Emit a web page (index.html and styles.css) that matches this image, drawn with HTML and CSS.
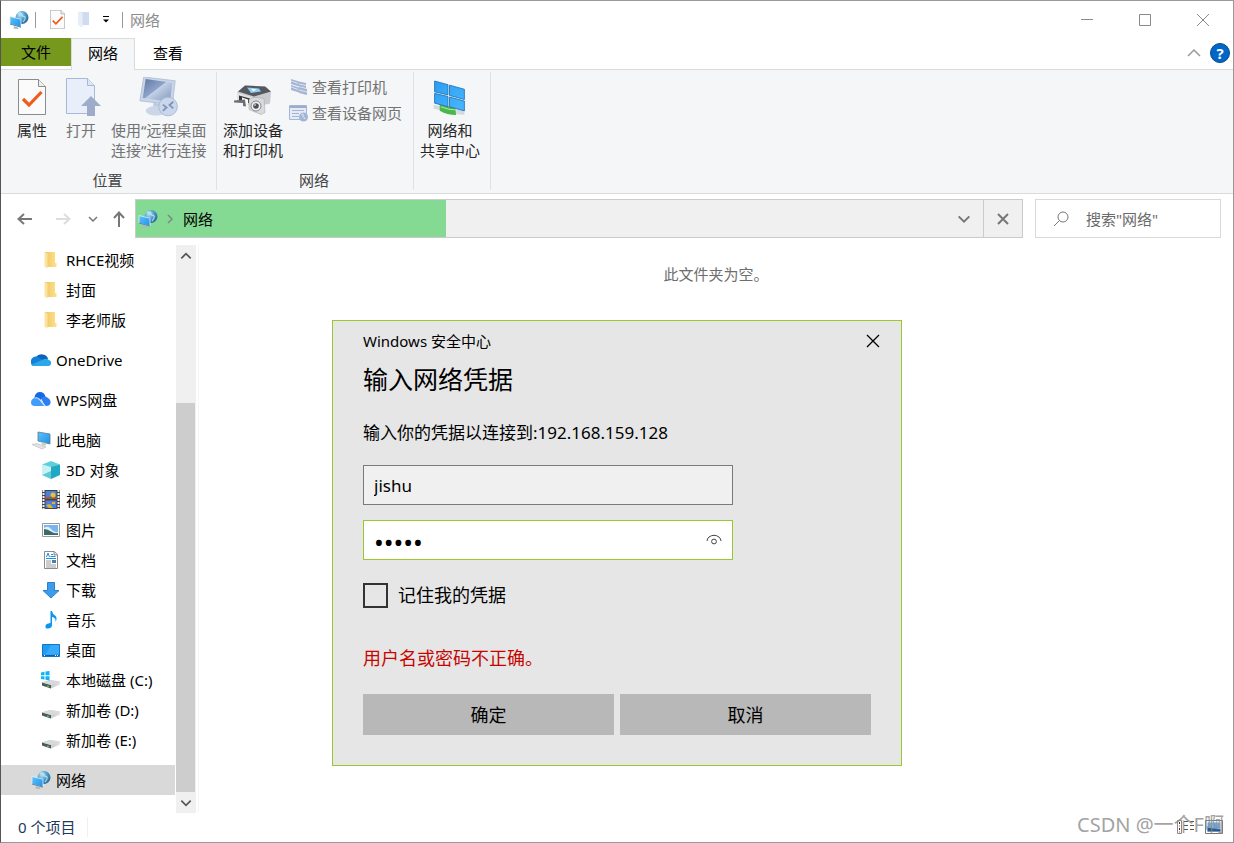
FILE: index.html
```html
<!DOCTYPE html>
<html lang="zh-CN">
<head>
<meta charset="utf-8">
<title>网络</title>
<link rel="stylesheet" href="styles.css">
</head>
<body>
<svg class="sprite" aria-hidden="true">
  <defs>
    <linearGradient id="g-screen" x1="0" y1="0" x2="1" y2="1"><stop offset="0" stop-color="#5cc4ff"/><stop offset="1" stop-color="#1e90e6"/></linearGradient>
    <radialGradient id="g-globe" cx=".35" cy=".3" r=".8"><stop offset="0" stop-color="#bfe6f5"/><stop offset=".5" stop-color="#4a9cc8"/><stop offset="1" stop-color="#1f5f90"/></radialGradient>
    <linearGradient id="g-folder" x1="0" y1="0" x2="1" y2="0"><stop offset="0" stop-color="#edc765"/><stop offset="1" stop-color="#ffe08a"/></linearGradient>
    <linearGradient id="g-dim" x1="0" y1="0" x2="1" y2="1"><stop offset="0" stop-color="#5f78a4"/><stop offset=".45" stop-color="#8ea3c8"/><stop offset=".47" stop-color="#c3d0e6"/><stop offset="1" stop-color="#7f95bc"/></linearGradient>
    <linearGradient id="g-tile" x1="0" y1="0" x2="1" y2="1"><stop offset="0" stop-color="#2c9cf0"/><stop offset="1" stop-color="#49b8ff"/></linearGradient>
    <linearGradient id="g-drive" x1="0" y1="0" x2="1" y2="0"><stop offset="0" stop-color="#b5b5b8"/><stop offset="1" stop-color="#e2e2e4"/></linearGradient>
  </defs>
  <symbol id="i-network" viewBox="0 0 20 20">
    <circle cx="13" cy="7.500" r="6.500" fill="url(#g-globe)"/>
    <path d="M9 4c2-2 4-1 4 1s2 1 3 2-1 4-2 5" fill="none" stroke="#d5effa" stroke-width="1.200" opacity=".7"/>
    <path d="M1 6.500 12 9.200v8L1 14z" fill="url(#g-screen)" stroke="#e4eef4" stroke-width=".8"/>
    <path d="M5 16.200l4 1.200.5 1.600-5-.6z" fill="#a9b7c0"/>
    <path d="M1 14l11 3.200" stroke="#3e6e8e" stroke-width=".8"/>
  </symbol>
  <symbol id="i-check" viewBox="0 0 28 36">
    <path d="M.5.500h20l7 7v28H.5z" fill="#fbfbfb" stroke="#8b8b8b"/><path d="M20.500.500v7h7" fill="#eee" stroke="#8b8b8b"/>
    <path d="M5 20l6 6L23.500 13" fill="none" stroke="#f05a1a" stroke-width="3.200"/>
  </symbol>
  <symbol id="i-folder-dim" viewBox="0 0 14 18"><path d="M3 1h10v14H3z" fill="#cfdcf0"/><path d="M1 0l5 2v16l-5-3z" fill="#e6eef9"/></symbol>
  <symbol id="i-folder" viewBox="0 0 20 20"><path d="M4 2h10v11h1.500v4H4z" fill="url(#g-folder)"/><path d="M3.500 2l3 1.500V18.500l-3-2z" fill="#fbe3a0"/></symbol>
  <symbol id="i-open" viewBox="0 0 36 40">
    <path d="M.5 1.500h21l7 7v28H.5z" fill="#e8effa" stroke="#a9b8d4"/><path d="M21.500 1.500v7h7" fill="#dce6f5" stroke="#a9b8d4"/>
    <path d="M25 19l10 10h-6v10h-8V29h-6z" fill="#9dacc9"/>
  </symbol>
  <symbol id="i-remote" viewBox="0 0 40 42">
    <path d="M4 0l33 4-3 25L0 25z" fill="#c9d5e8" stroke="#b3c1d8"/><path d="M6 2l28 4-2.500 20L3 22z" fill="url(#g-dim)"/>
    <path d="M14 27l8 1v6h-8z" fill="#bdc9dd"/><ellipse cx="17" cy="35.500" rx="11" ry="5" fill="#cbd6e7"/>
    <circle cx="29.500" cy="31" r="9.800" fill="#c9d6eb" stroke="#a8b9d6"/>
    <path d="M24 29l4 3-4 3.500M35 26l-4 3.500 4 3.500" fill="none" stroke="#7d92b8" stroke-width="1.800"/>
  </symbol>
  <symbol id="i-printer" viewBox="0 0 38 32">
    <path d="M3 9l9-7 20 1 5 6-1 11-13 3L3 17z" fill="#c9cccf"/><path d="M4 8l7-6 20 1 6 5-17 5z" fill="#55595d"/>
    <path d="M13 4l12 1 2 3-10 1.500z" fill="#8ecdf3"/><path d="M17 5l6 1-4 2z" fill="#e9f7ff"/>
    <path d="M3 9l16 5v9L3 18z" fill="#dfe1e3"/><path d="M5 12l11 3v5L5 17z" fill="#33373a"/>
    <path d="M8 14l6 2v5l-6-1.500z" fill="#fff"/><path d="M0 17l11-1 1 7-3-.5v-3l-9-.5z" fill="#6d7073"/>
    <path d="M15 16l4-2h4l7 1 1 14-4 2-12-5z" fill="#d9dadb" stroke="#a9abad" stroke-width=".6"/>
    <circle cx="22" cy="22.500" r="5" fill="#f2f2f2" stroke="#888"/><circle cx="22" cy="22.500" r="2.800" fill="#48525a"/><circle cx="21" cy="21.500" r="1" fill="#9dc4d6"/>
  </symbol>
  <symbol id="i-printers-dim" viewBox="0 0 18 18">
    <path d="M1 1l8 2.500v5L1 6zM9 3.500l7 1.500v5L9 8.500zM1 7l8 2.500v5L1 12zM9 9l8 2v6l-8-2z" fill="#a5b5d2"/><path d="M1 3l7 2.500M9 6l7 1.500M1 9l7 2.500M9 12l8 2" stroke="#dbe4f2"/>
  </symbol>
  <symbol id="i-webpage-dim" viewBox="0 0 20 18">
    <path d="M.5 1.500h17v14H.5z" fill="#e4ebf6" stroke="#a5b5d2"/><path d="M1 3h16" stroke="#9aacd0" stroke-width="2"/>
    <path d="M3 6.500h12M3 9.500h7M3 12.500h7" stroke="#a5b5d2"/><circle cx="14.500" cy="13" r="4.500" fill="#a3b6d6"/><path d="M12 11c2-2 3 0 2 1s2 1 2 3" fill="none" stroke="#e4ebf6"/>
  </symbol>
  <symbol id="i-center" viewBox="0 0 32 36">
    <path d="M0 24l9 2v4l-9-2z" fill="#d6dadd"/><path d="M22 28l8 1v5l-8-1z" fill="#d6dadd"/>
    <path d="M6 23c5 2 10 3 15 3l1 8c-6 0-11-1-16-4z" fill="#4cb648"/><path d="M7 26c5 2 9 3 14 3" stroke="#a5e59c" fill="none"/>
    <path d="M1 1l13 3.500v10L1 11.500zM15.500 5l14.500 4v10l-14.500-4zM1 13l13 3v10L1 22.500zM15.500 16.500l14.500 4v9.500l-14.500-4z" fill="url(#g-tile)" stroke="#1b6fb5" stroke-width=".8"/>
  </symbol>
  <symbol id="i-onedrive" viewBox="0 0 20 20">
    <path d="M5 7a6.500 5.500 0 0 1 12 2l-6 3z" fill="#0a63bd"/><path d="M5 6.500a5 5 0 0 0-5 6q0 3.500 3 3.500l10-5-4-3q-2-1.500-4-1.500z" fill="#1381d8"/>
    <path d="M13 9q3-1 5 1 2.300 1 2.300 3t-2.500 3H4q-2 0-3-1.500z" fill="#2ba7ea"/>
  </symbol>
  <symbol id="i-wps" viewBox="0 0 20 20">
    <path d="M3.500 8a5.500 5.500 0 0 1 11-1q-5 1-7 7L6 9z" fill="#1668e8"/><path d="M3.500 8Q0 9 0 12.500T4 16h11q-3-3-6-7-2-2-5.500-1z" fill="#3f9dfb"/>
    <path d="M10 8q4-3 7 0 3 2 2.500 5T15 16q-2-1-5-8z" fill="#2c7ff2"/><path d="M4 8q3-1 5 2l5 6" fill="none" stroke="#cfe6ff" stroke-width="1.200"/>
  </symbol>
  <symbol id="i-pc" viewBox="0 0 20 20">
    <path d="M7 2l12 2v10L7 11z" fill="url(#g-screen)" stroke="#5d7a8b" stroke-width=".8"/><path d="M10 12l5 1v2.500h-4z" fill="#c6cbd0"/>
    <path d="M1 14.500l5-1 9 3.500-4 2z" fill="#e1e4e7" stroke="#b3b8bc" stroke-width=".6"/>
  </symbol>
  <symbol id="i-3d" viewBox="0 0 20 20">
    <path d="M1 4.500l9-3.500 9 3.500L10 8z" fill="#5fcfdc"/><path d="M1 4.500L10 7v12l-9-4z" fill="#c9f2f5"/><path d="M1 15l9-4v8z" fill="#5fcbd8"/><path d="M19 4.500L10 7v12l9-4z" fill="#21a9c4"/>
  </symbol>
  <symbol id="i-video" viewBox="0 0 20 20">
    <path d="M1 0h18v19H1z" fill="#444"/><path d="M2.500 0v19M17.500 0v19" stroke="#f2f2f2" stroke-width="2" stroke-dasharray="2 1"/>
    <path d="M4.500 1h11v8h-11zM4.500 10.500h11V18h-11z" fill="#4d7fe0"/><path d="M4.500 7h11v2h-11z" fill="#c7482e"/><circle cx="12" cy="5" r="2.500" fill="#e6c52d"/><path d="M5 15l4-1 3 4H8zM11 12h3v2h-3z" fill="#e0b524"/><path d="M10 6l2 3h-3z" fill="#2e9b44"/>
  </symbol>
  <symbol id="i-picture" viewBox="0 0 20 20">
    <path d="M1.500 3.500h17v13h-17z" fill="#fff" stroke="#999"/><path d="M3 5h14v10H3z" fill="#78b5ec"/><path d="M3 8q4-3 7 1t7 3v3H3z" fill="#dcefff"/><path d="M3 9q4 0 7 2.500t7 1.500v2H3z" fill="#3a6b64"/>
  </symbol>
  <symbol id="i-document" viewBox="0 0 20 20">
    <path d="M3.500 1.500h10l3 3v14h-13z" fill="#fff" stroke="#8b8b8b"/><path d="M13 1.500v3.500h3.500" fill="#ddd" stroke="#8b8b8b"/><path d="M5.500 7l1.500-4 1.500 4M10 4.500h2M9.500 6.500h5M5 8.500h10" stroke="#1c8fe0" fill="none"/><path d="M5 11h5M5 13h5M5 15h10M5 17h10" stroke="#9a9a9a"/><path d="M11 10h4v3h-4z" fill="#4b7fa6"/>
  </symbol>
  <symbol id="i-download" viewBox="0 0 20 20"><path d="M6.500 2.500h7v8h4.500L10 18 2 10.500h4.500z" fill="#3c9bea" stroke="#2b80cb"/></symbol>
  <symbol id="i-music" viewBox="0 0 20 20"><path d="M9.500 1h1.500q.5 3 3 4.500T15 11q-1 1-.5-.5Q15 8 11 7v8q0 3-3.500 3.500T4.500 16q0-2.500 5-3z" fill="#0b95f3"/></symbol>
  <symbol id="i-desktop" viewBox="0 0 20 20"><path d="M1.500 4.500h17v12h-17z" fill="#1e9bf5" stroke="#0f78c6"/><path d="M10 5h8v9l-14 1z" fill="#41b0ff" opacity=".7"/><path d="M2 15.500h16" stroke="#0a5fa5"/><path d="M3 15.500h1M14 15.500h1M16 15.500h1" stroke="#fff"/></symbol>
  <symbol id="i-drive" viewBox="0 0 20 20">
    <path d="M1 12.500L9 10l10 1.500v3L10 18.500 1 15.500z" fill="url(#g-drive)"/><path d="M1 12.500l9 2.500v3.500l-9-3z" fill="#54575a"/><path d="M1 12.500L9 10l10 1.500-9 3.500z" fill="#d9d9dc"/><path d="M6 16l2 .6" stroke="#35d43f" stroke-width="1.500"/>
  </symbol>
  <symbol id="i-drive-c" viewBox="0 0 20 20">
    <use href="#i-drive"/><path d="M0 2.500l3.500-.7v3.400H0zM4.500 1.600L8.500 1v4.200h-4zM0 6.200h3.500v3.400L0 9zM4.500 6.200h4v4.200l-4-.7z" fill="#0fb5f2"/>
  </symbol>
  <symbol id="i-down" viewBox="0 0 12 12"><path d="M2 4l4 4 4-4" fill="none" stroke="currentColor" stroke-width="1.500"/></symbol>
  <symbol id="i-up" viewBox="0 0 12 12"><path d="M2 8l4-4 4 4" fill="none" stroke="currentColor" stroke-width="1.500"/></symbol>
</svg>

<div class="window">
  <header class="titlebar">
    <svg class="app-icon"><use href="#i-network"/></svg>
    <span class="rule"></span>
    <button class="quick" aria-label="属性"><svg class="quick-check"><use href="#i-check"/></svg></button>
    <button class="quick" aria-label="新建文件夹"><svg class="quick-folder"><use href="#i-folder-dim"/></svg></button>
    <button class="quick" aria-label="自定义"><svg class="quick-more" viewBox="0 0 8 8"><path d="M1 .5h6" stroke="#000"/><path d="M1 3.500h6L4 6.500z"/></svg></button>
    <span class="rule rule-last"></span>
    <h1 class="window-title">网络</h1>
    <div class="window-controls">
      <button aria-label="最小化"><svg viewBox="0 0 12 12"><path d="M0 5.500h12"/></svg></button>
      <button aria-label="最大化"><svg viewBox="0 0 12 12"><path d="M.5.500h11v11H.5z"/></svg></button>
      <button aria-label="关闭"><svg viewBox="0 0 12 12"><path d="M0 0l12 12M12 0L0 12"/></svg></button>
    </div>
  </header>

  <nav class="tabs">
    <button class="tab tab-file">文件</button>
    <button class="tab tab-active">网络</button>
    <button class="tab">查看</button>
    <div class="tabs-end">
      <button aria-label="折叠功能区"><svg class="collapse" viewBox="0 0 14 8"><path d="M1 7l6-6 6 6" fill="none" stroke="#9a9a9a" stroke-width="1.500"/></svg></button>
      <button class="help" aria-label="帮助">?</button>
    </div>
  </nav>

  <section class="ribbon">
    <div class="group group-place">
      <div class="tools">
        <button class="tool"><svg class="ic-check"><use href="#i-check"/></svg>属性</button>
        <button class="tool dim"><svg class="ic-open"><use href="#i-open"/></svg>打开</button>
        <button class="tool dim"><svg class="ic-remote"><use href="#i-remote"/></svg>使用“远程桌面<br>连接”进行连接</button>
      </div>
      <p class="group-name">位置</p>
    </div>
    <div class="group group-net">
      <div class="tools">
        <button class="tool"><svg class="ic-printer"><use href="#i-printer"/></svg>添加设备<br>和打印机</button>
        <div class="small-tools">
          <button class="small-tool"><svg><use href="#i-printers-dim"/></svg>查看打印机</button>
          <button class="small-tool"><svg><use href="#i-webpage-dim"/></svg>查看设备网页</button>
        </div>
      </div>
      <p class="group-name">网络</p>
    </div>
    <div class="group group-center">
      <div class="tools">
        <button class="tool"><svg class="ic-center"><use href="#i-center"/></svg>网络和<br>共享中心</button>
      </div>
    </div>
  </section>

  <div class="navbar">
    <div class="history">
      <button aria-label="后退"><svg class="arrow" viewBox="0 0 16 16"><path d="M1 8h14M7 3L1.500 8 7 13"/></svg></button>
      <button aria-label="前进"><svg class="arrow off" viewBox="0 0 16 16"><path d="M1 8h14M9 3l5.500 5L9 13"/></svg></button>
      <button class="recent" aria-label="最近"><svg class="chev"><use href="#i-down"/></svg></button>
      <button class="parent" aria-label="向上"><svg class="arrow" viewBox="0 0 16 16"><path d="M8 16V2M3 7l5-5.500L13 7"/></svg></button>
    </div>
    <div class="address">
      <div class="progress" style="width:35%"></div>
      <svg class="address-icon"><use href="#i-network"/></svg>
      <svg class="crumb" viewBox="0 0 8 12"><path d="M2 2l4 4-4 4" fill="none" stroke="#7d8a80" stroke-width="1.500"/></svg>
      <span class="address-text">网络</span>
      <button class="address-drop" aria-label="历史"><svg><use href="#i-down"/></svg></button>
      <button class="address-stop" aria-label="停止"><svg viewBox="0 0 12 12"><path d="M1 1l10 10M11 1L1 11" stroke="#777" stroke-width="2"/></svg></button>
    </div>
    <label class="search">
      <svg viewBox="0 0 16 16"><path d="M1 15l5.500-5.500" /><circle cx="10" cy="6" r="5"/></svg>
      <input type="text" placeholder='搜索"网络"' aria-label="搜索">
    </label>
  </div>

  <main class="content">
    <nav class="tree">
      <ul>
        <li><a class="sub" href="#"><svg><use href="#i-folder"/></svg>RHCE视频</a></li>
        <li><a class="sub" href="#"><svg><use href="#i-folder"/></svg>封面</a></li>
        <li><a class="sub" href="#"><svg><use href="#i-folder"/></svg>李老师版</a></li>
      </ul>
      <ul><li><a href="#"><svg><use href="#i-onedrive"/></svg>OneDrive</a></li></ul>
      <ul><li><a href="#"><svg><use href="#i-wps"/></svg>WPS网盘</a></li></ul>
      <ul>
        <li><a href="#"><svg><use href="#i-pc"/></svg>此电脑</a></li>
        <li><a class="sub" href="#"><svg><use href="#i-3d"/></svg>3D 对象</a></li>
        <li><a class="sub" href="#"><svg><use href="#i-video"/></svg>视频</a></li>
        <li><a class="sub" href="#"><svg><use href="#i-picture"/></svg>图片</a></li>
        <li><a class="sub" href="#"><svg><use href="#i-document"/></svg>文档</a></li>
        <li><a class="sub" href="#"><svg><use href="#i-download"/></svg>下载</a></li>
        <li><a class="sub" href="#"><svg><use href="#i-music"/></svg>音乐</a></li>
        <li><a class="sub" href="#"><svg><use href="#i-desktop"/></svg>桌面</a></li>
        <li><a class="sub" href="#"><svg><use href="#i-drive-c"/></svg>本地磁盘 (C:)</a></li>
        <li><a class="sub" href="#"><svg><use href="#i-drive"/></svg>新加卷 (D:)</a></li>
        <li><a class="sub" href="#"><svg><use href="#i-drive"/></svg>新加卷 (E:)</a></li>
      </ul>
      <ul><li><a class="selected" href="#"><svg><use href="#i-network"/></svg>网络</a></li></ul>
    </nav>
    <div class="scrollbar">
      <button aria-label="向上滚动"><svg><use href="#i-up"/></svg></button>
      <div class="track"><div class="thumb"></div></div>
      <button aria-label="向下滚动"><svg><use href="#i-down"/></svg></button>
    </div>
    <section class="files"><p>此文件夹为空。</p></section>
  </main>

  <footer class="status">
    <span class="count">0 个项目</span>
    <div class="views">
      <button aria-label="详细信息"><svg viewBox="0 0 18 16"><path d="M.5 1.500h4v13h-4z" fill="#fff" stroke="#888"/><path d="M2 4h1M2 10h1" stroke="#333" stroke-width="2"/><path d="M2 7h1M2 13h1" stroke="#c33" stroke-width="1"/><path d="M7 2.500h4M13 2.500h4M7 6.500h4M13 6.500h4M7 10.500h4M13 10.500h4" stroke="#555"/></svg></button>
      <button aria-label="大图标"><svg viewBox="0 0 18 16"><path d="M.5 1.500h17v13H.5z" fill="#fff" stroke="#777"/><path d="M2.500 3.500h13v9h-13z" fill="#6fb1ea"/><path d="M2.500 9l5 0 8 1.500v2h-13z" fill="#27578a"/></svg></button>
    </div>
  </footer>

  <form class="dialog" role="dialog" aria-labelledby="dialog-heading">
    <div class="dialog-bar"><span>Windows 安全中心</span>
      <button type="button" aria-label="关闭"><svg viewBox="0 0 14 14"><path d="M1 1l12 12M13 1L1 13" stroke="#000" stroke-width="1.300"/></svg></button></div>
    <h2 id="dialog-heading">输入网络凭据</h2>
    <p class="message">输入你的凭据以连接到:192.168.159.128</p>
    <input class="field" type="text" value="jishu" aria-label="用户名">
    <div class="field field-active">
      <input type="password" value="12345" aria-label="密码">
      <button type="button" aria-label="显示密码"><svg viewBox="0 0 16 12"><path d="M1 7q0-2 2-4 5-3.500 10 0 2 2 2 4" fill="none" stroke="#444"/><circle cx="8" cy="7.500" r="2.400" fill="none" stroke="#444"/></svg></button>
    </div>
    <label class="remember"><input type="checkbox">记住我的凭据</label>
    <p class="error">用户名或密码不正确。</p>
    <div class="actions"><button type="button">确定</button><button type="button">取消</button></div>
  </form>
  <div class="watermark">CSDN @一个F啊</div>
</div>
</body>
</html>
```
FILE: styles.css
```css
* { box-sizing: border-box; }
body { margin: 0; font: 15px/20px "Noto Sans", "Noto Sans CJK SC", sans-serif; color: #000; background: #fff; }
button, input { font: inherit; color: inherit; }
button { border: 0; padding: 0; margin: 0; background: none; display: flex; align-items: center; justify-content: center; }
p, h1, h2, ul { margin: 0; padding: 0; font-weight: 400; }
li { list-style: none; }
a { color: inherit; text-decoration: none; }
svg { display: block; flex: none; }
.sprite { position: absolute; width: 0; height: 0; }

.window { position: relative; min-height: 100vh; display: flex; flex-direction: column; border: 1px solid #999; border-left-color: #555; background: #fff; }

.titlebar { display: flex; align-items: center; height: 37px; padding-left: 8px; }
.app-icon { width: 20px; height: 20px; }
.rule { width: 1px; height: 16px; margin: 0 14px 0 6px; background: #999; }
.quick { margin-right: 12px; }
.quick-check { width: 15px; height: 19px; }
.quick-folder { width: 13px; height: 17px; }
.quick-more { width: 8px; height: 8px; }
.rule-last { margin: 0 7px 0 0; }
.window-title { font-size: 15px; color: #8c8c8c; }
.window-controls { display: flex; margin-left: auto; padding-right: 1px; }
.window-controls button { width: 58px; height: 36px; }
.window-controls svg { width: 12px; height: 12px; fill: none; stroke: #8a8a8a; }

.tabs { display: flex; height: 32px; border-bottom: 1px solid #dadbdc; }
.tab { width: 66px; height: 30px; }
.tab-file { width: 70px; height: 28px; background: #76981d; }
.tab-active { width: 64px; height: 32px; padding-bottom: 3px; background: #f5f6f7; border: 1px solid #dadbdc; border-bottom: 0; }
.tabs-end { display: flex; align-items: center; gap: 9px; height: 30px; margin-left: auto; padding-right: 3px; }
.collapse { width: 14px; height: 8px; }
.help { width: 20px; height: 20px; border-radius: 50%; background: #0066c8; border: 1px solid #064b86; color: #fff; font-size: 15px; font-weight: 700; }

.ribbon { display: flex; height: 124px; background: #f4f6f8; border-bottom: 1px solid #dadbdc; padding: 2px 0 3px; }
.group { display: flex; flex-direction: column; border-right: 1px solid #e0e1e2; padding-top: 5px; }
.group-place { width: 216px; }
.group-net { width: 197px; }
.group-center { width: 77px; }
.tools { display: flex; }
.group-place .tools { gap: 11px; padding-left: 12px; }
.group-net .tools { gap: 6px; padding-left: 6px; }
.group-center .tools { padding-left: 6px; }
.tool { flex-direction: column; width: 38px; line-height: 20px; white-space: nowrap; justify-content: flex-start; color: #262626; }
.tool:has(br) { width: auto; }
.tool svg { margin-bottom: 3px; }
.tool.dim, .small-tool { color: #737373; }
.ic-check { width: 28px; height: 40px; padding: 1px 0; }
.ic-open { width: 42px; height: 40px; padding-left: 6px; }
.ic-remote { width: 40px; height: 40px; }
.ic-printer { width: 38px; height: 40px; padding-top: 5px; }
.ic-center { width: 34px; height: 40px; padding-top: 3px; }
.small-tools { display: flex; flex-direction: column; gap: 6px; }
.small-tool { justify-content: flex-start; gap: 3px; white-space: nowrap; }
.small-tool svg { width: 20px; height: 18px; }
.group-name { margin-top: auto; padding-right: 2px; text-align: center; color: #444; }

.navbar { display: flex; padding: 5px 12px 7px 0; }
.history { display: flex; width: 134px; padding-left: 10px; }
.history button { width: 28px; color: #777; margin-right: 10px; }
.history .recent { width: 12px; margin-right: 6px; }
.history .parent { margin: 0; }
.arrow { width: 16px; height: 16px; fill: none; stroke: #777; stroke-width: 2; }
.arrow.off { stroke: #ddd; }
.chev { width: 12px; height: 12px; }
.address { position: relative; flex: 1; display: flex; align-items: center; height: 39px; background: #f0f0f0; border: 1px solid #cbcbcb; }
.progress { position: absolute; inset: 0 auto 0 0; background: #84d993; }
.address-icon { position: relative; width: 20px; height: 20px; margin-left: 2px; }
.crumb { position: relative; width: 8px; height: 12px; margin: 0 9px 0 8px; }
.address-text { position: relative; }
.address-drop { margin-left: auto; width: 38px; height: 37px; color: #777; }
.address-drop svg { width: 16px; height: 16px; }
.address-stop { width: 39px; height: 37px; border-left: 1px solid #cbcbcb; }
.address-stop svg { width: 12px; height: 12px; }
.search { display: flex; align-items: center; gap: 17px; width: 186px; height: 39px; margin-left: 12px; padding-left: 17px; border: 1px solid #d9d9d9; }
.search svg { width: 16px; height: 16px; fill: none; stroke: #777; }
.search input { min-width: 0; flex: 1; border: 0; padding: 0; outline: 0; background: none; }
.search input::placeholder { color: #6a6a6a; opacity: 1; }

.content { flex: 1; display: flex; }
.tree { width: 175px; padding-right: 1px; display: flex; flex-direction: column; gap: 10px; }
.tree a { display: flex; align-items: center; gap: 5px; height: 30px; padding-left: 30px; white-space: nowrap; }
.tree a.sub { padding-left: 40px; }
.tree a.selected { background: #d9d9d9; }
.tree svg { width: 20px; height: 20px; }
.scrollbar { width: 20px; display: flex; flex-direction: column; background: #f0f0f0; color: #555; }
.scrollbar button { width: 19px; height: 21px; }
.scrollbar svg { width: 14px; height: 14px; }
.track { flex: 1; display: flex; flex-direction: column; justify-content: flex-end; }
.thumb { width: 19px; height: 74%; background: #cdcdcd; }
.files { flex: 1; margin-left: 2px; border-left: 1px solid #f5f5f5; padding-top: 19px; text-align: center; color: #6d6d6d; }

.status { display: flex; align-items: center; height: 29px; padding: 0 10px 2px 17px; color: #1e395b; }
.count { padding-right: 12px; border-right: 1px solid #f0f0f0; }
.views { display: flex; gap: 10px; margin-left: auto; }
.views svg { width: 18px; height: 16px; }

.dialog { position: absolute; top: 319px; left: 50%; width: 570px; transform: translateX(-50%); padding: 10px 30px; border: 1px solid #99c92b; background: #e6e6e6; }
.dialog-bar { display: flex; justify-content: space-between; }
.dialog-bar button { width: 20px; height: 20px; margin-right: -12px; }
.dialog-bar svg { width: 14px; height: 14px; }
.dialog h2 { margin-top: 10px; font-size: 25px; line-height: 36px; }
.message { margin-top: 23px; font-size: 17px; line-height: 26px; }
.field { display: flex; width: 370px; height: 40px; margin: 19px 0 15px; padding: 1px 10px 0; border: 1px solid #7a7a7a; border-radius: 0; background: #f0f0f0; font-size: 17px; outline: 0; }
.field-active { margin: 0; padding: 0 10px; border-color: #99c92b; background: #fff; }
.field-active input { flex: 1; min-width: 0; border: 0; padding: 4px 0 0; outline: 0; background: none; font-size: 26px; }
.field-active svg { width: 16px; height: 12px; }
.remember { display: flex; align-items: center; gap: 10px; margin-top: 22px; font-size: 18px; line-height: 26px; }
.remember input { appearance: none; width: 25px; height: 25px; margin: 0; border: 2px solid #333; }
.error { margin-top: 37px; font-size: 18px; line-height: 26px; color: #c50500; }
.actions { display: grid; grid-template-columns: 1fr 1fr; gap: 6px; margin: 23px 0 20px; }
.actions button { height: 41px; background: #b8b8b8; font-size: 18px; }
.watermark { position: absolute; right: 9px; bottom: 4px; font-size: 20px; line-height: 26px; color: #8d8d8d; opacity: 0.8; }
```
